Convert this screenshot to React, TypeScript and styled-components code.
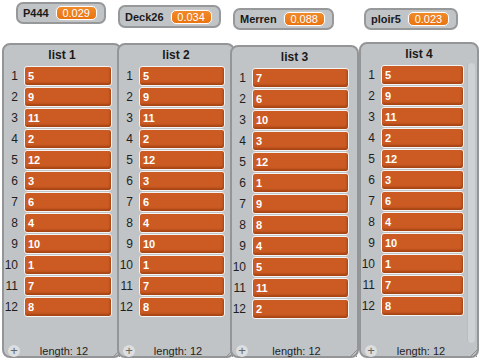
import React from 'react';
import styled, { createGlobalStyle } from 'styled-components';

const GlobalStyle = createGlobalStyle`
  html, body {
    margin: 0;
    padding: 0;
    background: #ffffff;
  }
  * {
    box-sizing: border-box;
  }
`;

const Stage = styled.div`
  position: relative;
  width: 480px;
  height: 360px;
  overflow: hidden;
  background: #ffffff;
  font-family: 'Liberation Sans', Arial, sans-serif;
`;

const Watcher = styled.div<{ $x: number; $y: number; $h: number }>`
  position: absolute;
  left: ${p => p.$x}px;
  top: ${p => p.$y}px;
  height: ${p => p.$h}px;
  display: flex;
  align-items: center;
  gap: 7px;
  padding: 0 7px 0 5px;
  background: #c1c4c7;
  border: 2px solid #969899;
  border-radius: 7px;
`;

const WatcherLabel = styled.span`
  font-size: 11px;
  font-weight: bold;
  color: #1a1a1a;
`;

const WatcherValue = styled.span`
  min-width: 41px;
  height: 14px;
  line-height: 12px;
  padding: 0 4px;
  text-align: center;
  font-size: 11px;
  color: #ffffff;
  background: linear-gradient(#f08a2a, #ea7410);
  border: 1px solid #ffffff;
  border-radius: 5px;
  box-shadow: 0 0 0 1px #c9c9c9;
`;

const ListFrame = styled.div<{ $x: number; $y: number; $w: number; $h: number }>`
  position: absolute;
  left: ${p => p.$x}px;
  top: ${p => p.$y}px;
  width: ${p => p.$w}px;
  height: ${p => p.$h}px;
  display: flex;
  flex-direction: column;
  background: #c1c4c7;
  border: 2px solid #949596;
  border-radius: 8px;
`;

const ListTitle = styled.div`
  height: 21px;
  line-height: 20px;
  text-align: center;
  font-size: 12px;
  font-weight: bold;
  color: #1a1a1a;
`;

const ListBody = styled.div`
  flex: 1;
  display: flex;
  gap: 3px;
  padding-right: 2px;
  min-height: 0;
`;

const Rows = styled.div<{ $right: number }>`
  flex: 1;
  display: flex;
  flex-direction: column;
  gap: 1px;
  padding-right: ${p => p.$right}px;
`;

const Row = styled.div`
  display: flex;
  align-items: center;
  gap: 6px;
  height: 20px;
`;

const Index = styled.span`
  width: 14px;
  text-align: right;
  font-size: 12px;
  color: #1e1e1e;
`;

const Cell = styled.div`
  flex: 1;
  height: 20px;
  line-height: 18px;
  padding-left: 3px;
  font-size: 11px;
  font-weight: bold;
  color: #ffffff;
  background: #cb5b22;
  border: 1px solid #f4f4f4;
  border-radius: 3px;
  box-shadow: inset -1px -2px 2px rgba(120, 40, 5, 0.45);
`;

const Track = styled.div`
  width: 8px;
  margin-top: -2px;
  margin-bottom: 2px;
  background: #cfd2d5;
  border-left: 1px solid #b9bcbf;
  border-radius: 4px;
`;

const ListFooter = styled.div`
  height: 12px;
  margin-bottom: -1px;
  display: grid;
  grid-template-columns: 1fr auto 1fr;
  align-items: center;
  padding: 0 0 0 4px;
`;

const AddButton = styled.span`
  width: 12px;
  height: 12px;
  border-radius: 50%;
  background: #dcdedf;
  color: #666;
  display: flex;
  align-items: center;
  justify-content: center;
  font-size: 13px;
  line-height: 12px;
`;

const LengthLabel = styled.span`
  font-size: 11px;
  color: #1e1e1e;
`;

const Resize = styled.svg`
  justify-self: end;
  align-self: end;
`;

const variables = [
  { name: 'P444', value: '0.029', x: 16, y: 2, h: 22 },
  { name: 'Deck26', value: '0.034', x: 118, y: 5, h: 23 },
  { name: 'Merren', value: '0.088', x: 233, y: 8, h: 22 },
  { name: 'ploir5', value: '0.023', x: 364, y: 8, h: 22 },
];

const order = [5, 9, 11, 2, 12, 3, 6, 4, 10, 1, 7, 8];

const lists = [
  { name: 'list 1', items: order, x: 2, y: 43, w: 120, h: 315, scroll: false },
  { name: 'list 2', items: order, x: 117, y: 43, w: 118, h: 315, scroll: false },
  { name: 'list 3', items: [7, 6, 10, 3, 12, 1, 9, 8, 4, 5, 11, 2], x: 230, y: 45, w: 129, h: 313, scroll: false },
  { name: 'list 4', items: order, x: 359, y: 42, w: 120, h: 316, scroll: true },
];

const App: React.FC = () => {
  return (
    <>
      <GlobalStyle />
      <Stage>
        {variables.map(v => (
          <Watcher key={v.name} $x={v.x} $y={v.y} $h={v.h}>
            <WatcherLabel>{v.name}</WatcherLabel>
            <WatcherValue>{v.value}</WatcherValue>
          </Watcher>
        ))}

        {lists.map(list => (
          <ListFrame key={list.name} $x={list.x} $y={list.y} $w={list.w} $h={list.h}>
            <ListTitle>{list.name}</ListTitle>
            <ListBody>
              <Rows $right={list.scroll ? 0 : 6}>
                {list.items.map((item, i) => (
                  <Row key={i}>
                    <Index>{i + 1}</Index>
                    <Cell>{item}</Cell>
                  </Row>
                ))}
              </Rows>
              {list.scroll && <Track />}
            </ListBody>
            <ListFooter>
              <AddButton>+</AddButton>
              <LengthLabel>length: {list.items.length}</LengthLabel>
              <Resize width="8" height="8" viewBox="0 0 8 8">
                <path d="M1 8 L8 1 M4 8 L8 4 M7 8 L8 7" stroke="#8c8e90" strokeWidth="1" />
              </Resize>
            </ListFooter>
          </ListFrame>
        ))}
      </Stage>
    </>
  );
};

export default App;
